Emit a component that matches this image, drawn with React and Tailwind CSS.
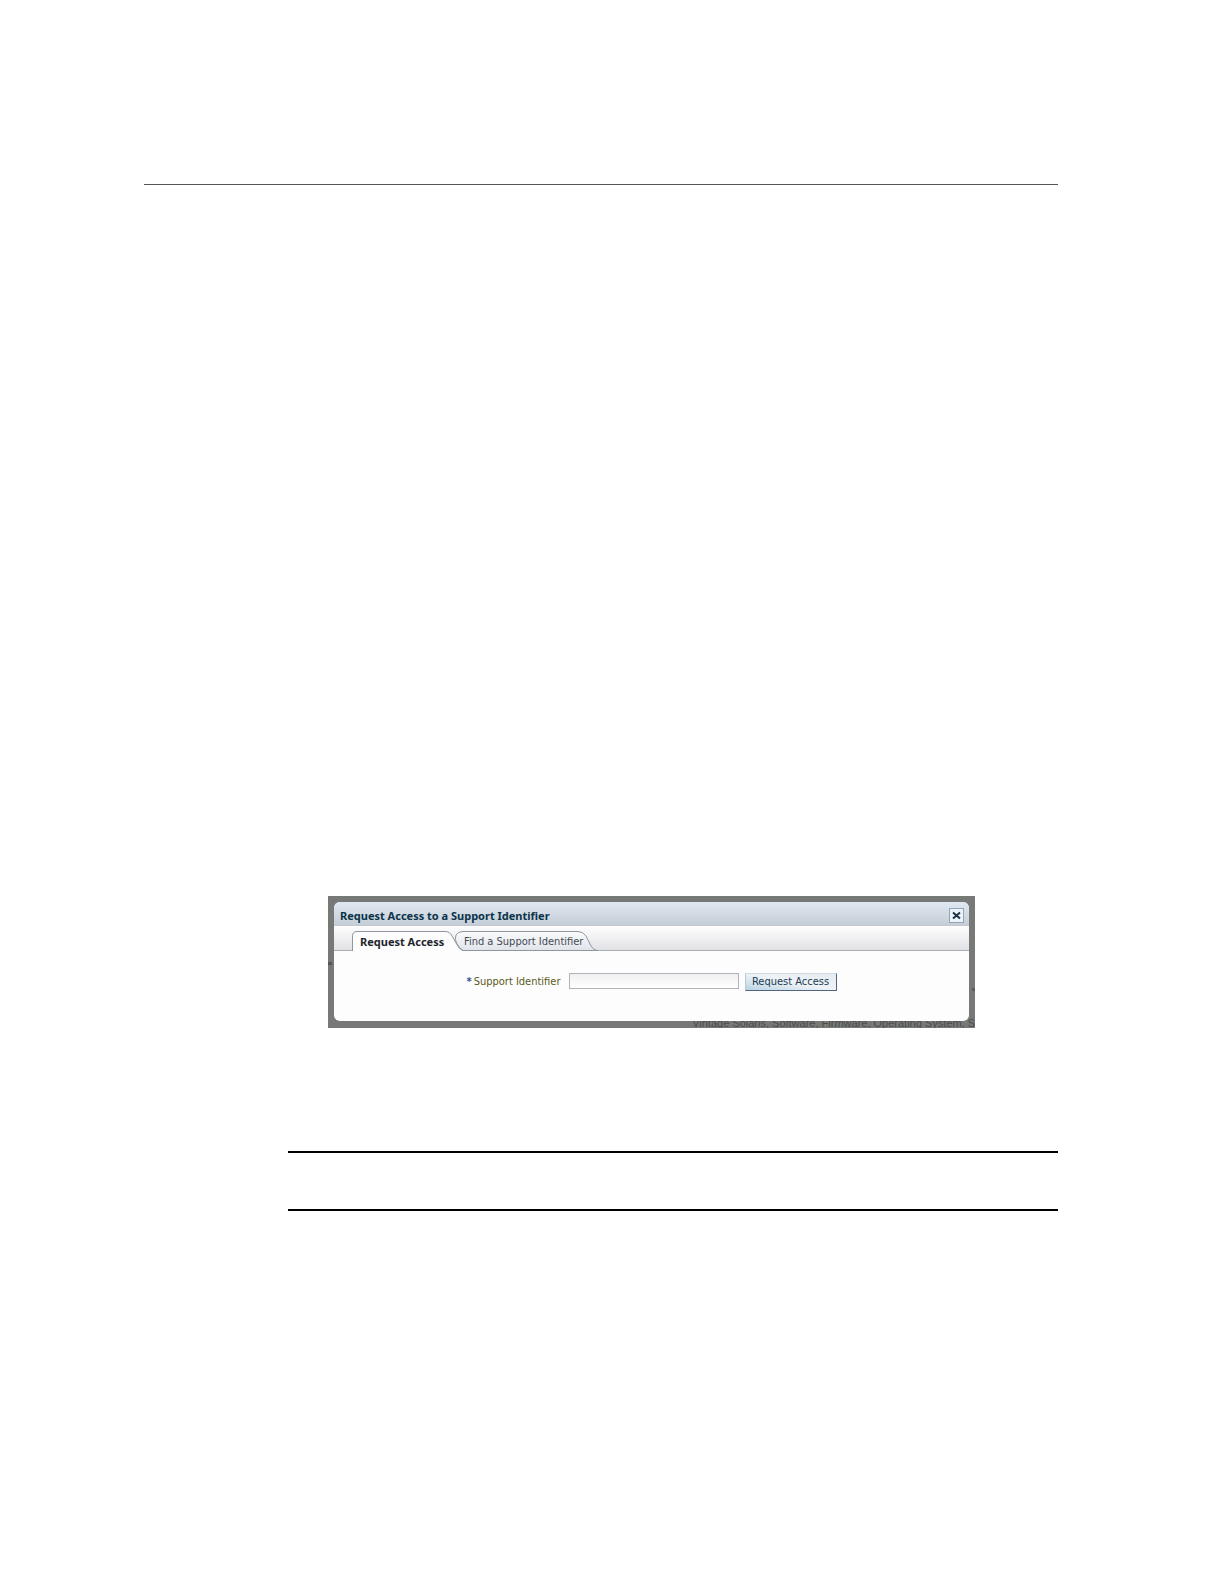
import React, { useState } from 'react';

const TabShapes = () => (
  <svg
    className="absolute left-0 top-0 h-5 w-[256px]"
    viewBox="0 0 256 20"
    fill="none"
    aria-hidden="true"
  >
    <defs>
      <linearGradient id="idleTab" x1="0" y1="0" x2="0" y2="1">
        <stop offset="0" stopColor="#fbfbfc" />
        <stop offset="1" stopColor="#e0e4ea" />
      </linearGradient>
    </defs>
    <path
      d="M111 19.5 Q108 18 105 13 Q102 8 104 4 Q106 .5 111 .5 H226 Q231 .5 234 5 L238 13 Q241 19.5 246 19.5 Z"
      fill="url(#idleTab)"
      stroke="#8f969e"
    />
    <path d="M.5 20 V5 Q.5 .5 5 .5 H93 Q98 .5 100 5 L104 12 Q107 18.5 111 20 Z" fill="#fdfdfe" />
    <path
      d="M.5 20 V5 Q.5 .5 5 .5 H93 Q98 .5 100 5 L104 12 Q107 18.5 111 19.5"
      stroke="#8f969e"
    />
  </svg>
);

const RequestDialog = () => {
  const [identifier, setIdentifier] = useState('');

  return (
    <div className="relative overflow-hidden bg-[#777977] p-1.5 pb-[7px] text-[11px] leading-4">
      <span className="absolute left-0 top-[66px] h-[3px] w-1 bg-[#555755]" />
      <span className="absolute right-0 top-[92px] h-[3px] w-[3px] bg-[#5b5d5b]" />
      <p className="absolute -bottom-[3px] right-0 whitespace-nowrap font-['Liberation_Sans',sans-serif] text-[#4b4d4b]">
        Vintage Solaris, Software, Firmware, Operating System, S
      </p>

      <div role="dialog" aria-labelledby="dialogTitle" className="relative overflow-hidden rounded-md bg-[#fdfdfe]">
        <div className="flex h-6 items-center justify-between border-b border-[#c3c8cf] bg-gradient-to-b from-[#e0e8f1] to-[#c5cdd6] pl-1.5 pr-[5px] pt-1">
          <h2 id="dialogTitle" className="font-['Noto_Sans',sans-serif] font-bold text-[#0b3349]">
            Request Access to a Support Identifier
          </h2>
          <button
            aria-label="Close"
            className="flex h-[15px] w-[15px] items-center justify-center border border-[#8fa3ba] bg-[#eef3f8]"
          >
            <svg className="h-[9px] w-[9px]" viewBox="0 0 9 9" stroke="#1f3347" strokeWidth="2">
              <path d="M1 1.5 L8 7.5 M8 1.5 L1 7.5" />
            </svg>
          </button>
        </div>

        <div className="flex h-[25px] items-end border-b border-[#a9aeb5] bg-gradient-to-b from-[#fefefe] to-[#e2e2e6] pl-[18px]">
          <div role="tablist" className="relative -mb-px flex h-5">
            <TabShapes />
            <button
              role="tab"
              aria-selected="true"
              className="relative w-[104px] pl-2 pt-0.5 text-left font-['Noto_Sans',sans-serif] font-bold text-[#22262b]"
            >
              Request Access
            </button>
            <button role="tab" aria-selected="false" className="relative w-[144px] pl-2 pt-0.5 text-left text-[#444a52]">
              Find a Support Identifier
            </button>
          </div>
        </div>

        <form className="flex h-[70px] items-start justify-center pt-[22px]" onSubmit={(e) => e.preventDefault()}>
          <label htmlFor="identifier" className="mr-2 flex gap-0.5 pt-px text-[#5c5a1a]">
            <span className="font-bold text-[#2f5583]">*</span>
            Support Identifier
          </label>
          <input
            id="identifier"
            type="text"
            className="mr-1.5 h-4 w-[170px] border border-[#b0b3b8] bg-gradient-to-b from-[#f0f0f2] to-white px-1"
            value={identifier}
            onChange={(e) => setIdentifier(e.target.value)}
          />
          <button
            type="submit"
            className="h-[18px] w-[92px] rounded-[1px] border border-b-[#53657c] border-l-[#b7c9d6] border-r-[#53657c] border-t-[#cfd9e2] bg-gradient-to-tr from-[#b9d3e2] via-[#eef3f7] to-[#e6ebf1] text-[#1d3a52]"
          >
            Request Access
          </button>
        </form>
      </div>
    </div>
  );
};

export default function App() {
  return (
    <main className="min-h-screen bg-white pl-36 pr-[166px] pt-[184px] font-['DejaVu_Sans_Condensed','DejaVu_Sans',sans-serif]">
      <hr className="border-t border-[#555555]" />
      <div className="pl-36 pt-[711px]">
        <div className="ml-10 mr-[83px]">
          <RequestDialog />
        </div>
        <hr className="mt-[123px] border-t-2 border-black" />
        <hr className="mt-14 border-t-2 border-black" />
      </div>
    </main>
  );
}
